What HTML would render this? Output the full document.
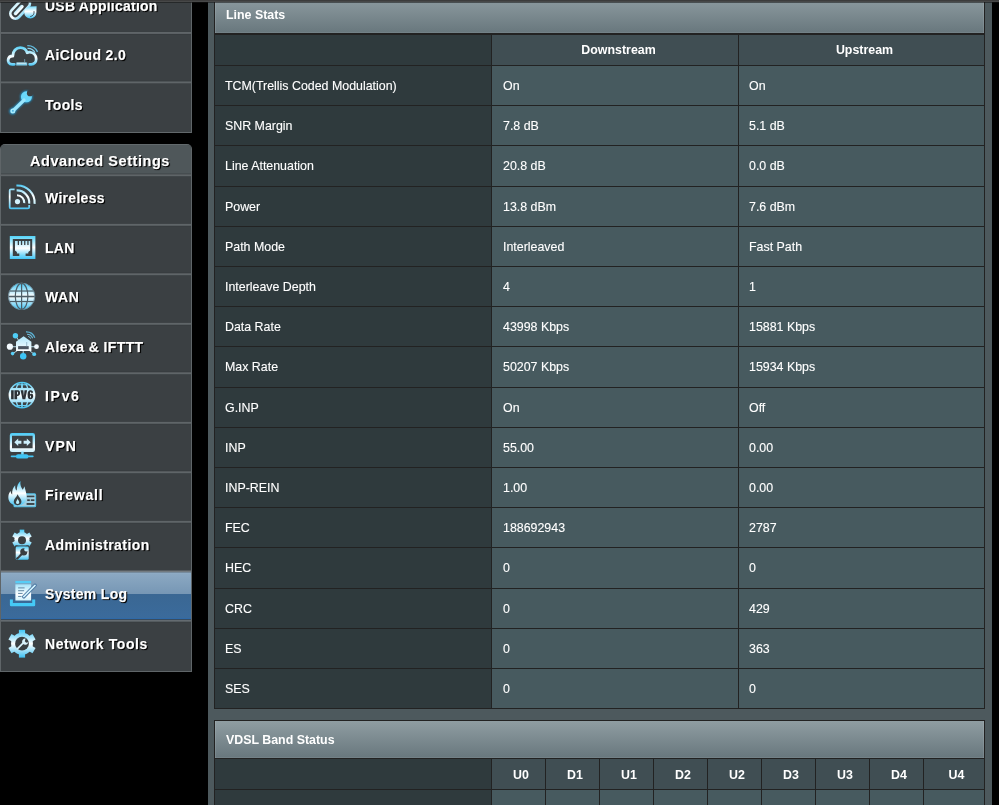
<!DOCTYPE html>
<html><head><meta charset="utf-8">
<style>
*{margin:0;padding:0;box-sizing:border-box}
html,body{width:999px;height:805px;overflow:hidden;background:#000;position:relative;font-family:"Liberation Sans",sans-serif}
.a{position:absolute}
.topstrip{left:0;top:0;width:999px;height:3px;background:linear-gradient(#3c3c3c 0px,#3c3c3c 1px,#474848 1px,#474848 2px,rgba(20,20,20,0.55) 2px,rgba(20,20,20,0.55) 3px);z-index:50}
.side{left:0;top:0;width:192px;border-left:1px solid #5f6568;border-right:1px solid #5f6568;background:#3a3f42}
.mi{position:absolute;left:1px;width:190px;background:#3a3f42}
.ml{position:absolute;left:0;width:192px;height:1px;background:#5d6366}
.mt{position:absolute;left:45px;color:#fff;font-weight:bold;font-size:14px;letter-spacing:0.3px;text-shadow:1px 1px 1px #000, 1px 1px 0 #111;white-space:nowrap;line-height:16px;-webkit-text-stroke:0.25px rgba(255,255,255,0.7)}
.ic{position:absolute;left:4px;width:36px;height:36px}
.panel{left:208px;top:0;width:784px;height:805px;background:#4d595d}
.tbl{position:absolute;left:214px;width:771px;border:1px solid #222;background:#222}
.th{position:absolute;left:215px;width:769px;background:linear-gradient(#8f9da2,#68777d);box-shadow:inset 1px 0 0 rgba(255,255,255,0.10),inset -1px 0 0 rgba(255,255,255,0.10),inset 0 -1px 0 rgba(255,255,255,0.07);color:#fff;font-weight:bold;font-size:12.4px;padding-left:11px;white-space:nowrap}
.hl{position:absolute;height:1px;background:#222527}
.vl{position:absolute;width:1px;background:#222527}
.c1{position:absolute;left:215px;width:276px;background:#2f3a3d}
.c2{position:absolute;background:#475a5f}
.ch{position:absolute;background:#404e53}
.t{position:absolute;color:#fff;font-size:12.4px;white-space:nowrap;line-height:14px;-webkit-text-stroke:0.2px rgba(255,255,255,0.6)}
.tb{position:absolute;color:#fff;font-size:12.4px;font-weight:bold;white-space:nowrap;line-height:14px;text-align:center}
.t,.tb,.mt{will-change:transform}
.th span{display:inline-block;will-change:transform}
</style></head><body>
<div class="a topstrip"></div>

<div class="a" style="left:0;top:0;width:192px;height:133px;background:#3b4043;border-left:1px solid #5f6568;border-right:1px solid #5f6568;border-bottom:1px solid #62686b"></div>
<div class="a" style="left:0;top:-16.6px;width:44px;height:50px"><svg width="44" height="52" viewBox="0 -16.60 44 52" style="position:absolute;left:0;top:0;overflow:visible"><defs><linearGradient id="i1a" gradientUnits="userSpaceOnUse" x1="0" y1="2" x2="0" y2="19"><stop offset="0" stop-color="#c8f1fd"/><stop offset="0.45" stop-color="#ffffff"/><stop offset="1" stop-color="#36bff3"/></linearGradient><linearGradient id="i1b" gradientUnits="userSpaceOnUse" x1="0" y1="7" x2="0" y2="19"><stop offset="0" stop-color="#7fdcfa"/><stop offset="0.4" stop-color="#ffffff"/><stop offset="1" stop-color="#3dc3f4"/></linearGradient><linearGradient id="i1c" gradientUnits="userSpaceOnUse" x1="0" y1="4" x2="0" y2="16"><stop offset="0" stop-color="#5fd0f6"/><stop offset="0.5" stop-color="#ffffff"/><stop offset="1" stop-color="#3cc3f4"/></linearGradient></defs><g transform="rotate(-47 20 9)">
      <rect x="8.2" y="4" width="24" height="10" rx="5" fill="none" stroke="url(#i1a)" stroke-width="2.7"/>
      <rect x="11.6" y="7.2" width="13" height="3.6" rx="1.8" fill="url(#i1c)"/>
    </g>
    <path d="M36.6 6.6 L36.4 12.9 A6.1 6.1 0 1 1 30.2 6.8 Z" fill="url(#i1b)"/>
    <path d="M34 11.5 C34.5 14.5 33 16.5 30.2 17" stroke="#3a4a55" stroke-width="0.9" fill="none"/></svg></div>
<div class="mt" style="top:-2.1px;letter-spacing:0.23px">USB Application</div>
<div class="a" style="left:1px;top:30px;width:190px;height:6px;background:linear-gradient(rgb(59,64,67) 0px 1px, rgb(58,63,66) 1px 2px, rgb(95,101,104) 2px 3px, rgb(91,96,100) 3px 4px, rgb(55,60,63) 4px 5px, rgb(59,64,67) 5px 6px)"></div>
<div class="a" style="left:0;top:32.9px;width:44px;height:50px"><svg width="44" height="52" viewBox="0 32.90 44 52" style="position:absolute;left:0;top:0;overflow:visible"><defs><linearGradient id="i2a" gradientUnits="userSpaceOnUse" x1="0" y1="46" x2="0" y2="66"><stop offset="0" stop-color="#4fcff7"/><stop offset="0.55" stop-color="#ffffff"/><stop offset="1" stop-color="#3fc3f4"/></linearGradient></defs><path d="M14.3 64.2 L12.2 64.2 C9 64.2 7.6 61.6 8.2 59.2 C8.8 57 10.6 55.7 12.8 55.9 C12.7 51 16.1 47.5 20.2 47.5 C23.8 47.5 26.3 49.8 27.2 52.6 C28 52.2 29 52 30 52.1 C33.8 52.5 36.2 55.6 36.2 59 C36.2 62 34 64.2 31.3 64.2 L29.7 64.2" fill="none" stroke="url(#i2a)" stroke-width="2.8" stroke-linecap="round" stroke-linejoin="round"/>
    <path d="M27.3 45.6 A11 11 0 0 1 37.5 51.8" fill="none" stroke="#62bde0" stroke-width="1.3"/>
    <path d="M27.5 48.3 A8 8 0 0 1 35 52.6" fill="none" stroke="#8fd4ee" stroke-width="1.2"/>
    <rect x="16.2" y="62.4" width="11" height="3" fill="#7fcdea"/>
    <rect x="17" y="62.6" width="9" height="1" fill="#d9eef6"/>
    <rect x="24.4" y="59" width="0.7" height="3.2" fill="#7fb7cf"/></svg></div>
<div class="mt" style="top:47.4px;letter-spacing:0.38px">AiCloud 2.0</div>
<div class="a" style="left:1px;top:79px;width:190px;height:7px;background:linear-gradient(rgb(59,64,67) 0px 1px, rgb(57,62,65) 1px 2px, rgb(77,83,86) 2px 3px, rgb(95,101,104) 3px 4px, rgb(69,74,77) 4px 5px, rgb(59,64,67) 5px 6px, rgb(59,64,67) 6px 7px)"></div>
<div class="a" style="left:0;top:82.4px;width:44px;height:50px"><svg width="44" height="52" viewBox="0 82.40 44 52" style="position:absolute;left:0;top:0;overflow:visible"><defs></defs><mask id="i3m" maskUnits="userSpaceOnUse" x="0" y="80" width="44" height="40"><rect x="0" y="80" width="44" height="40" fill="#fff"/><circle cx="30" cy="93.6" r="3.1" fill="#000"/><path d="M30 93.6 L36 87.6 L38 95 Z" fill="#000"/></mask>
    <filter id="i3f" x="-50%" y="-50%" width="200%" height="200%"><feGaussianBlur stdDeviation="1.3"/></filter>
    <g mask="url(#i3m)">
    <g filter="url(#i3f)" opacity="0.9" fill="#20a6e8" stroke="#20a6e8"><circle cx="26.4" cy="97.2" r="5.6"/><path d="M24 100.5 L12.6 111.6" stroke-width="4.2" stroke-linecap="round"/><circle cx="12.6" cy="111.6" r="2.8"/></g>
    <circle cx="26.4" cy="97.2" r="5.5" fill="#6ad8fb"/>
    </g>
    <path d="M24 100.5 L12.8 111.4" stroke="#9ae6fd" stroke-width="3.4" stroke-linecap="round"/>
    <circle cx="12.8" cy="111.4" r="2.5" fill="#a6eafd"/>
    <circle cx="12.9" cy="111.3" r="0.8" fill="#2d9fd6"/></svg></div>
<div class="mt" style="top:96.9px;letter-spacing:0.3px">Tools</div>
<div class="a" style="left:0;top:144px;width:192px;height:528px;background:#3b4043;border:1px solid #5f6568;border-top-color:#62696c;border-radius:5px 5px 0 0"></div>
<div class="a" style="left:1px;top:145px;width:190px;height:30px;background:#4f575a;border-radius:4px 4px 0 0"></div>
<div class="mt" style="left:4px;width:192px;text-align:center;top:152.5px;font-size:14.5px;letter-spacing:0.55px">Advanced Settings</div>
<div class="a" style="left:1px;top:172px;width:190px;height:6px;background:linear-gradient(rgb(79,87,90) 0px 1px, rgb(70,77,80) 1px 2px, rgb(83,88,91) 2px 3px, rgb(95,101,104) 3px 4px, rgb(64,70,73) 4px 5px, rgb(59,64,67) 5px 6px)"></div>
<div class="a" style="left:0;top:175.3px;width:44px;height:50px"><svg width="44" height="52" viewBox="0 175.28 44 52" style="position:absolute;left:0;top:0;overflow:visible"><defs><linearGradient id="i4a" gradientUnits="userSpaceOnUse" x1="0" y1="184" x2="0" y2="210"><stop offset="0" stop-color="#3fc5f5"/><stop offset="0.5" stop-color="#ffffff"/><stop offset="1" stop-color="#3cc0f2"/></linearGradient><linearGradient id="i4b" gradientUnits="userSpaceOnUse" x1="0" y1="184" x2="0" y2="205"><stop offset="0" stop-color="#3fc4f4"/><stop offset="0.6" stop-color="#ffffff"/><stop offset="1" stop-color="#bfeefc"/></linearGradient></defs><path d="M14.6 189.7 L10.8 189.7 Q9.7 189.7 9.7 190.8 L9.7 207.5 Q9.7 208.7 10.8 208.7 L28 208.7 Q29.2 208.7 29.2 207.5 L29.2 205.3" fill="none" stroke="url(#i4a)" stroke-width="1.8"/>
    <circle cx="17.5" cy="201.9" r="2.6" fill="#d2f1fc"/>
    <path d="M17 195.6 A7.3 7.3 0 0 1 24.3 203.4" fill="none" stroke="url(#i4b)" stroke-width="2.1"/>
    <path d="M16.6 190.7 A12.2 12.2 0 0 1 29.2 203.9" fill="none" stroke="url(#i4b)" stroke-width="2.1"/>
    <path d="M16.4 185.8 A17.2 17.2 0 0 1 34.6 204.1" fill="none" stroke="url(#i4b)" stroke-width="2.1"/></svg></div>
<div class="mt" style="top:190.3px;letter-spacing:0.3px">Wireless</div>
<div class="a" style="left:1px;top:222px;width:190px;height:6px;background:linear-gradient(rgb(59,64,67) 0px 1px, rgb(62,67,70) 1px 2px, rgb(95,101,104) 2px 3px, rgb(85,91,94) 3px 4px, rgb(56,61,64) 4px 5px, rgb(59,64,67) 5px 6px)"></div>
<div class="a" style="left:0;top:224.8px;width:44px;height:50px"><svg width="44" height="52" viewBox="0 224.78 44 52" style="position:absolute;left:0;top:0;overflow:visible"><defs><linearGradient id="i5a" gradientUnits="userSpaceOnUse" x1="0" y1="235.5" x2="0" y2="259"><stop offset="0" stop-color="#4dd2f9"/><stop offset="0.5" stop-color="#ffffff"/><stop offset="1" stop-color="#3cc4f5"/></linearGradient><linearGradient id="i5b" gradientUnits="userSpaceOnUse" x1="0" y1="240" x2="0" y2="256"><stop offset="0" stop-color="#9fe3fa"/><stop offset="0.5" stop-color="#ffffff"/><stop offset="1" stop-color="#62d2f7"/></linearGradient></defs><path d="M9.8 235.7 H35.4 V258.7 H9.8 Z M12.8 238.7 V255.7 H32.2 V238.7 Z" fill="url(#i5a)" fill-rule="evenodd"/>
    <path d="M15 240.7 L30.2 240.7 L30.2 250.4 L28.3 251.8 L28.3 253.2 L25.6 253.2 L25.6 256 L19.3 256 L19.3 253.2 L16.9 253.2 L16.9 251.8 L15 250.4 Z" fill="url(#i5b)"/>
    <g fill="#3a3f42"><rect x="17.7" y="240.6" width="1.3" height="4.2"/><rect x="20.9" y="240.6" width="1.3" height="4.2"/><rect x="24.1" y="240.6" width="1.3" height="4.2"/><rect x="27.3" y="240.6" width="1.3" height="4.2"/></g></svg></div>
<div class="mt" style="top:239.8px;letter-spacing:0.3px">LAN</div>
<div class="a" style="left:1px;top:271px;width:190px;height:6px;background:linear-gradient(rgb(59,64,67) 0px 1px, rgb(56,61,64) 1px 2px, rgb(83,88,91) 2px 3px, rgb(95,101,104) 3px 4px, rgb(64,70,73) 4px 5px, rgb(59,64,67) 5px 6px)"></div>
<div class="a" style="left:0;top:274.3px;width:44px;height:50px"><svg width="44" height="52" viewBox="0 274.28 44 52" style="position:absolute;left:0;top:0;overflow:visible"><defs><linearGradient id="i6a" gradientUnits="userSpaceOnUse" x1="0" y1="283" x2="0" y2="310"><stop offset="0" stop-color="#3fc5f5"/><stop offset="0.5" stop-color="#ffffff"/><stop offset="1" stop-color="#3cc0f2"/></linearGradient></defs><circle cx="21.6" cy="296.6" r="13.2" fill="url(#i6a)" stroke="#70909f" stroke-width="0.9"/>
    <g stroke="#4d5d66" stroke-width="1.2" fill="none">
    <ellipse cx="21.6" cy="296.6" rx="6.3" ry="13"/>
    <line x1="21.6" y1="283.6" x2="21.6" y2="309.6"/>
    <line x1="9.5" y1="291.3" x2="33.7" y2="291.3"/>
    <line x1="8.5" y1="296.8" x2="34.7" y2="296.8" stroke-width="1.6"/>
    <line x1="9.5" y1="301.8" x2="33.7" y2="301.8"/>
    </g></svg></div>
<div class="mt" style="top:289.3px;letter-spacing:0.55px">WAN</div>
<div class="a" style="left:1px;top:321px;width:190px;height:6px;background:linear-gradient(rgb(59,64,67) 0px 1px, rgb(62,67,70) 1px 2px, rgb(95,101,104) 2px 3px, rgb(85,91,94) 3px 4px, rgb(56,61,64) 4px 5px, rgb(59,64,67) 5px 6px)"></div>
<div class="a" style="left:0;top:323.8px;width:44px;height:50px"><svg width="44" height="52" viewBox="0 323.78 44 52" style="position:absolute;left:0;top:0;overflow:visible"><defs><linearGradient id="i7a" gradientUnits="userSpaceOnUse" x1="0" y1="336" x2="0" y2="351"><stop offset="0" stop-color="#aee6fb"/><stop offset="1" stop-color="#ffffff"/></linearGradient></defs><g stroke="#bfe6f5" stroke-width="0.9">
    <line x1="10" y1="346.5" x2="36.5" y2="346.5"/><line x1="15.4" y1="335.6" x2="19" y2="340.5"/>
    <line x1="12.6" y1="353.4" x2="18" y2="350"/><line x1="34.2" y1="354" x2="29" y2="350"/><line x1="23.2" y1="350" x2="23.2" y2="354"/></g>
    <path d="M16 341.6 L23.6 336 L31.4 341.6 L31.4 350.8 L16 350.8 Z" fill="url(#i7a)"/>
    <rect x="18.1" y="345.9" width="10.6" height="3.1" fill="#4d5662"/>
    <rect x="26.3" y="341.8" width="0.9" height="4.2" fill="#8fb3c6"/>
    <circle cx="15.4" cy="335.6" r="2.7" fill="#4fcdf6"/>
    <circle cx="9.9" cy="346.5" r="3.1" fill="#f4fbff"/>
    <circle cx="36.5" cy="346.5" r="2.4" fill="#f2faff"/>
    <circle cx="12.6" cy="353.4" r="1.8" fill="#58cff7"/>
    <circle cx="34.2" cy="354" r="1.9" fill="#58cff7"/>
    <circle cx="23.2" cy="356.1" r="3.2" fill="#3ec5f5"/>
    <path d="M26 331.6 A9 9 0 0 1 34.8 337.6" fill="none" stroke="#5cb3d6" stroke-width="1.2"/>
    <path d="M27 334 A6 6 0 0 1 32.6 338" fill="none" stroke="#6fbddc" stroke-width="1.1"/>
    <path d="M28.2 336.2 A3.2 3.2 0 0 1 30.6 338.4" fill="none" stroke="#7cc4e0" stroke-width="1"/></svg></div>
<div class="mt" style="top:338.8px;letter-spacing:0.4px">Alexa &amp; IFTTT</div>
<div class="a" style="left:1px;top:370px;width:190px;height:6px;background:linear-gradient(rgb(59,64,67) 0px 1px, rgb(56,61,64) 1px 2px, rgb(83,88,91) 2px 3px, rgb(95,101,104) 3px 4px, rgb(64,70,73) 4px 5px, rgb(59,64,67) 5px 6px)"></div>
<div class="a" style="left:0;top:373.3px;width:44px;height:50px"><svg width="44" height="52" viewBox="0 373.28 44 52" style="position:absolute;left:0;top:0;overflow:visible"><defs><linearGradient id="i8a" gradientUnits="userSpaceOnUse" x1="0" y1="382" x2="0" y2="409"><stop offset="0" stop-color="#45c6f3"/><stop offset="0.5" stop-color="#ffffff"/><stop offset="1" stop-color="#3cc0f2"/></linearGradient></defs><clipPath id="i8c"><circle cx="22" cy="395.4" r="11.8"/></clipPath>
    <circle cx="22" cy="395.4" r="13.4" fill="url(#i8a)"/>
    <g clip-path="url(#i8c)">
      <rect x="8" y="381" width="28" height="7.2" fill="#3a3f42"/>
      <rect x="8" y="402.6" width="28" height="8" fill="#3a3f42"/>
      <g fill="none" stroke="url(#i8a)" stroke-width="1.4"><ellipse cx="22" cy="395.4" rx="6.8" ry="13.2"/><line x1="22" y1="381" x2="22" y2="410" stroke-width="1.8"/><line x1="8" y1="385" x2="36" y2="385" stroke-width="1.1"/><line x1="8" y1="405.8" x2="36" y2="405.8" stroke-width="1.1"/></g>
    </g>
    <path d="M0 0 H2.6 V9 H0 Z M3.3 0 H6.9 C8.5 0 8.9 1.2 8.9 2.8 C8.9 4.4 8.5 5.6 6.9 5.6 H6 V9 H3.3 Z M6 1.5 V4.1 H6.5 C6.9 4.1 7 3.6 7 2.8 C7 2 6.9 1.5 6.5 1.5 Z M9.5 0 H12.2 L12.8 5.6 L13.4 0 H16 L14.2 9 H11.4 Z M19.3 0 C17.3 0 16.5 1.5 16.5 4.5 C16.5 7.5 17.3 9 19.3 9 C21.3 9 22.1 7.7 22.1 5.8 C22.1 4 21.3 3.4 20.2 3.4 C19.5 3.4 19.1 3.6 18.9 4 V3.2 C18.9 2 19 1.5 19.4 1.5 C19.8 1.5 19.9 1.9 19.9 2.5 H22 C22 0.9 21.2 0 19.3 0 Z M19.3 5.1 C19 5.1 18.9 5.5 18.9 6.2 C18.9 7 19 7.5 19.3 7.5 C19.7 7.5 19.9 7.1 19.9 6.2 C19.9 5.5 19.7 5.1 19.3 5.1 Z" transform="translate(11.1 390.6)" fill="#2b3136" fill-rule="evenodd"/></svg></div>
<div class="mt" style="top:388.3px;letter-spacing:1.7px">IPv6</div>
<div class="a" style="left:1px;top:420px;width:190px;height:6px;background:linear-gradient(rgb(59,64,67) 0px 1px, rgb(62,67,70) 1px 2px, rgb(95,101,104) 2px 3px, rgb(85,91,94) 3px 4px, rgb(56,61,64) 4px 5px, rgb(59,64,67) 5px 6px)"></div>
<div class="a" style="left:0;top:422.8px;width:44px;height:50px"><svg width="44" height="52" viewBox="0 422.78 44 52" style="position:absolute;left:0;top:0;overflow:visible"><defs><linearGradient id="i9a" gradientUnits="userSpaceOnUse" x1="0" y1="432.8" x2="0" y2="452"><stop offset="0" stop-color="#48caf6"/><stop offset="0.7" stop-color="#ffffff"/><stop offset="1" stop-color="#c8effc"/></linearGradient></defs><path d="M12 432.8 H32.8 Q35 432.8 35 435 V449.5 Q35 451.7 32.8 451.7 H12 Q9.8 451.7 9.8 449.5 V435 Q9.8 432.8 12 432.8 Z M12 435.6 V448 H32.6 V435.6 Z" fill="url(#i9a)" fill-rule="evenodd"/>
    <path d="M14.3 442.1 L18.2 438.2 L18.2 440.6 L21.4 440.6 L21.4 443.6 L18.2 443.6 L18.2 445.9 Z" fill="#cdf0fc"/>
    <path d="M30.7 442.1 L26.8 438.2 L26.8 440.6 L23.6 440.6 L23.6 443.6 L26.8 443.6 L26.8 445.9 Z" fill="#cdf0fc"/>
    <rect x="21.2" y="451.5" width="2.5" height="3" fill="#7fdaf8"/>
    <rect x="10.7" y="455.2" width="23" height="1.9" rx="0.95" fill="#45c6f5"/>
    <rect x="15.9" y="454" width="12.6" height="4.4" rx="2.2" fill="#3ec4f4"/></svg></div>
<div class="mt" style="top:437.8px;letter-spacing:1.05px">VPN</div>
<div class="a" style="left:1px;top:469px;width:190px;height:6px;background:linear-gradient(rgb(59,64,67) 0px 1px, rgb(56,61,64) 1px 2px, rgb(83,88,91) 2px 3px, rgb(95,101,104) 3px 4px, rgb(64,70,73) 4px 5px, rgb(59,64,67) 5px 6px)"></div>
<div class="a" style="left:0;top:472.3px;width:44px;height:50px"><svg width="44" height="52" viewBox="0 472.28 44 52" style="position:absolute;left:0;top:0;overflow:visible"><defs><linearGradient id="i10a" gradientUnits="userSpaceOnUse" x1="0" y1="481" x2="0" y2="506"><stop offset="0" stop-color="#3fc5f5"/><stop offset="0.5" stop-color="#ffffff"/><stop offset="1" stop-color="#3cc0f2"/></linearGradient></defs><rect x="14" y="494.2" width="21.6" height="12.8" rx="1" fill="#9fcfe2" stroke="#58c3ea" stroke-width="1.1"/>
    <g fill="#3b4246"><rect x="26.6" y="495.9" width="7.8" height="1.6"/><rect x="27.2" y="499.6" width="2.6" height="1.7"/><rect x="30.8" y="499.6" width="3.6" height="1.7"/><rect x="26.6" y="503.3" width="7.8" height="1.9"/></g>
    <path d="M17.4 505.8 C11 505.8 7.8 501.5 8.4 496.3 C8.7 493.8 9.8 492.3 10.6 491.3 C10.8 493.3 11.4 494.4 12.2 494.9 C11.7 490.8 13.3 487.3 15.2 485.5 C15 488.4 15.8 490.6 16.7 490.9 C16.8 486.4 18.2 483.2 20.5 481.3 C19.8 485 21.2 488.2 22.8 490 C23.5 488.4 24.2 487.4 24.5 486.5 C24.8 489 26.6 492.4 26.6 496.8 C26.6 502 23.2 505.8 17.4 505.8 Z" fill="url(#i10a)"/>
    <path d="M17.6 505.6 C15 505.6 13.4 503.6 13.8 501.4 C14.2 499 16.6 497.4 17.6 494.6 C18.8 497.4 21 499 21.4 501.4 C21.8 503.6 20.2 505.6 17.6 505.6 Z" fill="#3a3f42"/>
    <path d="M17.6 504.2 C16.4 504.2 15.8 503.2 16.1 502.2 C16.5 501 17.4 500.2 17.6 498.8 C18 500.2 18.9 501 19.2 502.2 C19.5 503.2 18.9 504.2 17.6 504.2 Z" fill="#b7ecfb"/></svg></div>
<div class="mt" style="top:487.3px;letter-spacing:0.77px">Firewall</div>
<div class="a" style="left:1px;top:519px;width:190px;height:6px;background:linear-gradient(rgb(59,64,67) 0px 1px, rgb(62,67,70) 1px 2px, rgb(95,101,104) 2px 3px, rgb(85,91,94) 3px 4px, rgb(56,61,64) 4px 5px, rgb(59,64,67) 5px 6px)"></div>
<div class="a" style="left:0;top:521.8px;width:44px;height:50px"><svg width="44" height="52" viewBox="0 521.78 44 52" style="position:absolute;left:0;top:0;overflow:visible"><defs><linearGradient id="i11a" gradientUnits="userSpaceOnUse" x1="0" y1="529.5" x2="0" y2="547"><stop offset="0" stop-color="#48caf6"/><stop offset="0.5" stop-color="#ffffff"/><stop offset="1" stop-color="#3cc2f3"/></linearGradient><linearGradient id="i11b" gradientUnits="userSpaceOnUse" x1="0" y1="546" x2="0" y2="560"><stop offset="0" stop-color="#48caf6"/><stop offset="0.45" stop-color="#ffffff"/><stop offset="1" stop-color="#39c0f2"/></linearGradient></defs><circle cx="22" cy="539.3" r="7.6" fill="url(#i11a)"/><polygon points="19.70,529.40 24.30,529.40 24.30,539.30 19.70,539.30" fill="url(#i11a)"/><polygon points="29.42,532.36 31.72,536.34 23.15,541.29 20.85,537.31" fill="url(#i11a)"/><polygon points="31.72,542.26 29.42,546.24 20.85,541.29 23.15,537.31" fill="url(#i11a)"/><polygon points="24.30,549.20 19.70,549.20 19.70,539.30 24.30,539.30" fill="url(#i11a)"/><polygon points="14.58,546.24 12.28,542.26 20.85,537.31 23.15,541.29" fill="url(#i11a)"/><polygon points="12.28,536.34 14.58,532.36 23.15,537.31 20.85,541.29" fill="url(#i11a)"/>
    <circle cx="22" cy="540" r="4" fill="#3a3f42"/>
    <rect x="15.2" y="545.2" width="14" height="1.3" fill="#3a3f42"/>
    <rect x="15.7" y="546.4" width="13" height="13.2" rx="1.4" fill="url(#i11b)"/>
    <mask id="i11m" maskUnits="userSpaceOnUse" x="10" y="540" width="25" height="25"><rect x="10" y="540" width="25" height="25" fill="#fff"/><circle cx="26.2" cy="549.2" r="2" fill="#000"/><path d="M26.2 549.2 L30 545.5 L31 551 Z" fill="#000"/></mask>
    <g mask="url(#i11m)"><circle cx="23.8" cy="551.6" r="3.6" fill="#3a3f42"/></g>
    <path d="M22.5 553 L17.2 558.3" stroke="#3a3f42" stroke-width="2.3" stroke-linecap="round"/>
    <path d="M17 557 L18.8 555.2" stroke="#cfefff" stroke-width="0.6"/></svg></div>
<div class="mt" style="top:536.8px;letter-spacing:0.42px">Administration</div>
<div class="a" style="left:1px;top:571.3px;width:190px;height:49.5px;background:linear-gradient(#8eabc4 0%,#7797b5 45%,#3a6793 46%,#3b6b9c 97%,#2f6aa8 100%)"></div>
<div class="a" style="left:1px;top:569px;width:190px;height:5px;background:linear-gradient(rgb(59,64,67) 0px 1px, rgb(86,92,96) 1px 2px, rgb(115,123,128) 2px 3px, rgb(118,139,157) 3px 4px, rgb(142,171,196) 4px 5px)"></div>
<div class="a" style="left:0;top:571.3px;width:44px;height:50px"><svg width="44" height="52" viewBox="0 571.28 44 52" style="position:absolute;left:0;top:0;overflow:visible"><defs><linearGradient id="i12a" gradientUnits="userSpaceOnUse" x1="0" y1="585" x2="0" y2="601"><stop offset="0" stop-color="#a8e5fb"/><stop offset="0.6" stop-color="#ffffff"/><stop offset="1" stop-color="#d0f1fc"/></linearGradient></defs><rect x="15.4" y="581.2" width="15.7" height="2.4" fill="#56cdf6"/>
    <rect x="15.4" y="584.6" width="15.7" height="16.2" fill="url(#i12a)"/>
    <g fill="#6f93ad"><rect x="18.1" y="587.6" width="6.5" height="1.1"/><rect x="18.1" y="590.4" width="6" height="1.1"/><rect x="18.1" y="593.2" width="4.5" height="1.1"/><rect x="18.1" y="596.2" width="3.5" height="1.1"/></g>
    <path d="M23.8 597 L35 585.6" stroke="#3f6e9c" stroke-width="3.4" stroke-linecap="round"/>
    <path d="M23.8 597 L35 585.6" stroke="#d2f2fd" stroke-width="1.7" stroke-linecap="round"/>
    <path d="M9.9 599.8 L12.9 599.8 L12.9 603.2 L32.2 603.2 L32.2 599.8 L35.2 599.8 L35.2 605.4 Q35.2 606.6 34 606.6 L11.1 606.6 Q9.9 606.6 9.9 605.4 Z" fill="#45c9f6"/></svg></div>
<div class="mt" style="top:586.3px;letter-spacing:0.3px">System Log</div>
<div class="a" style="left:1px;top:618px;width:190px;height:6px;background:linear-gradient(rgb(47,106,168) 0px 1px, rgb(56,76,96) 1px 2px, rgb(100,107,112) 2px 3px, rgb(84,91,95) 3px 4px, rgb(57,62,65) 4px 5px, rgb(59,64,67) 5px 6px)"></div>
<div class="a" style="left:0;top:620.8px;width:44px;height:50px"><svg width="44" height="52" viewBox="0 620.78 44 52" style="position:absolute;left:0;top:0;overflow:visible"><defs><linearGradient id="i13a" gradientUnits="userSpaceOnUse" x1="0" y1="629.5" x2="0" y2="657.5"><stop offset="0" stop-color="#3fc5f5"/><stop offset="0.5" stop-color="#ffffff"/><stop offset="1" stop-color="#3cc0f2"/></linearGradient></defs><circle cx="22" cy="643.5" r="10.9" fill="url(#i13a)"/><polygon points="18.90,629.60 25.10,629.60 25.10,643.50 18.90,643.50" fill="url(#i13a)"/><polygon points="32.49,633.87 35.59,639.23 23.55,646.18 20.45,640.82" fill="url(#i13a)"/><polygon points="35.59,647.77 32.49,653.13 20.45,646.18 23.55,640.82" fill="url(#i13a)"/><polygon points="25.10,657.40 18.90,657.40 18.90,643.50 25.10,643.50" fill="url(#i13a)"/><polygon points="11.51,653.13 8.41,647.77 20.45,640.82 23.55,646.18" fill="url(#i13a)"/><polygon points="8.41,639.23 11.51,633.87 23.55,640.82 20.45,646.18" fill="url(#i13a)"/>
    <circle cx="22" cy="643.5" r="6.9" fill="#3a3f42"/>
    <path d="M17.6 648.4 L23 643" stroke="#d9f3fc" stroke-width="1.7" stroke-linecap="round"/>
    <path d="M25.2 638.2 C23.2 638.2 21.9 640 22.1 641.9 C22.3 643.8 24 644.9 25.7 644.6 C27.1 644.4 28 643.3 28.1 642 L26.2 642.5 L24.8 641.1 L25.6 638.3 Z" fill="#d9f3fc"/></svg></div>
<div class="mt" style="top:635.8px;letter-spacing:0.57px">Network Tools</div>
<div class="a panel"></div>
<div class="tbl" style="top:-5px;height:714px"></div>
<div class="th" style="top:-4px;height:37px;line-height:37px;padding-top:1px"><span>Line Stats</span></div>
<div class="c1" style="top:35px;height:30px"></div>
<div class="ch" style="left:492px;top:35px;width:246px;height:30px"></div>
<div class="ch" style="left:739px;top:35px;width:245px;height:30px"></div>
<div class="tb" style="left:499px;width:239px;top:43px">Downstream</div>
<div class="tb" style="left:745px;width:239px;top:43px">Upstream</div>
<div class="c1" style="top:66px;height:39px"></div>
<div class="c2" style="left:492px;top:66px;width:246px;height:39px"></div>
<div class="c2" style="left:739px;top:66px;width:245px;height:39px"></div>
<div class="t" style="left:225.4px;top:78.5px">TCM(Trellis Coded Modulation)</div>
<div class="t" style="left:503px;top:78.5px">On</div>
<div class="t" style="left:748.6px;top:78.5px">On</div>
<div class="c1" style="top:106px;height:39px"></div>
<div class="c2" style="left:492px;top:106px;width:246px;height:39px"></div>
<div class="c2" style="left:739px;top:106px;width:245px;height:39px"></div>
<div class="t" style="left:225.4px;top:118.5px">SNR Margin</div>
<div class="t" style="left:503px;top:118.5px">7.8 dB</div>
<div class="t" style="left:748.6px;top:118.5px">5.1 dB</div>
<div class="c1" style="top:146px;height:40px"></div>
<div class="c2" style="left:492px;top:146px;width:246px;height:40px"></div>
<div class="c2" style="left:739px;top:146px;width:245px;height:40px"></div>
<div class="t" style="left:225.4px;top:158.5px">Line Attenuation</div>
<div class="t" style="left:503px;top:158.5px">20.8 dB</div>
<div class="t" style="left:748.6px;top:158.5px">0.0 dB</div>
<div class="c1" style="top:187px;height:39px"></div>
<div class="c2" style="left:492px;top:187px;width:246px;height:39px"></div>
<div class="c2" style="left:739px;top:187px;width:245px;height:39px"></div>
<div class="t" style="left:225.4px;top:199.5px">Power</div>
<div class="t" style="left:503px;top:199.5px">13.8 dBm</div>
<div class="t" style="left:748.6px;top:199.5px">7.6 dBm</div>
<div class="c1" style="top:227px;height:39px"></div>
<div class="c2" style="left:492px;top:227px;width:246px;height:39px"></div>
<div class="c2" style="left:739px;top:227px;width:245px;height:39px"></div>
<div class="t" style="left:225.4px;top:239.5px">Path Mode</div>
<div class="t" style="left:503px;top:239.5px">Interleaved</div>
<div class="t" style="left:748.6px;top:239.5px">Fast Path</div>
<div class="c1" style="top:267px;height:39px"></div>
<div class="c2" style="left:492px;top:267px;width:246px;height:39px"></div>
<div class="c2" style="left:739px;top:267px;width:245px;height:39px"></div>
<div class="t" style="left:225.4px;top:279.5px">Interleave Depth</div>
<div class="t" style="left:503px;top:279.5px">4</div>
<div class="t" style="left:748.6px;top:279.5px">1</div>
<div class="c1" style="top:307px;height:39px"></div>
<div class="c2" style="left:492px;top:307px;width:246px;height:39px"></div>
<div class="c2" style="left:739px;top:307px;width:245px;height:39px"></div>
<div class="t" style="left:225.4px;top:319.5px">Data Rate</div>
<div class="t" style="left:503px;top:319.5px">43998 Kbps</div>
<div class="t" style="left:748.6px;top:319.5px">15881 Kbps</div>
<div class="c1" style="top:347px;height:40px"></div>
<div class="c2" style="left:492px;top:347px;width:246px;height:40px"></div>
<div class="c2" style="left:739px;top:347px;width:245px;height:40px"></div>
<div class="t" style="left:225.4px;top:359.5px">Max Rate</div>
<div class="t" style="left:503px;top:359.5px">50207 Kbps</div>
<div class="t" style="left:748.6px;top:359.5px">15934 Kbps</div>
<div class="c1" style="top:388px;height:39px"></div>
<div class="c2" style="left:492px;top:388px;width:246px;height:39px"></div>
<div class="c2" style="left:739px;top:388px;width:245px;height:39px"></div>
<div class="t" style="left:225.4px;top:400.5px">G.INP</div>
<div class="t" style="left:503px;top:400.5px">On</div>
<div class="t" style="left:748.6px;top:400.5px">Off</div>
<div class="c1" style="top:428px;height:39px"></div>
<div class="c2" style="left:492px;top:428px;width:246px;height:39px"></div>
<div class="c2" style="left:739px;top:428px;width:245px;height:39px"></div>
<div class="t" style="left:225.4px;top:440.5px">INP</div>
<div class="t" style="left:503px;top:440.5px">55.00</div>
<div class="t" style="left:748.6px;top:440.5px">0.00</div>
<div class="c1" style="top:468px;height:39px"></div>
<div class="c2" style="left:492px;top:468px;width:246px;height:39px"></div>
<div class="c2" style="left:739px;top:468px;width:245px;height:39px"></div>
<div class="t" style="left:225.4px;top:480.5px">INP-REIN</div>
<div class="t" style="left:503px;top:480.5px">1.00</div>
<div class="t" style="left:748.6px;top:480.5px">0.00</div>
<div class="c1" style="top:508px;height:39px"></div>
<div class="c2" style="left:492px;top:508px;width:246px;height:39px"></div>
<div class="c2" style="left:739px;top:508px;width:245px;height:39px"></div>
<div class="t" style="left:225.4px;top:520.5px">FEC</div>
<div class="t" style="left:503px;top:520.5px">188692943</div>
<div class="t" style="left:748.6px;top:520.5px">2787</div>
<div class="c1" style="top:548px;height:40px"></div>
<div class="c2" style="left:492px;top:548px;width:246px;height:40px"></div>
<div class="c2" style="left:739px;top:548px;width:245px;height:40px"></div>
<div class="t" style="left:225.4px;top:560.5px">HEC</div>
<div class="t" style="left:503px;top:560.5px">0</div>
<div class="t" style="left:748.6px;top:560.5px">0</div>
<div class="c1" style="top:589px;height:39px"></div>
<div class="c2" style="left:492px;top:589px;width:246px;height:39px"></div>
<div class="c2" style="left:739px;top:589px;width:245px;height:39px"></div>
<div class="t" style="left:225.4px;top:601.5px">CRC</div>
<div class="t" style="left:503px;top:601.5px">0</div>
<div class="t" style="left:748.6px;top:601.5px">429</div>
<div class="c1" style="top:629px;height:39px"></div>
<div class="c2" style="left:492px;top:629px;width:246px;height:39px"></div>
<div class="c2" style="left:739px;top:629px;width:245px;height:39px"></div>
<div class="t" style="left:225.4px;top:641.5px">ES</div>
<div class="t" style="left:503px;top:641.5px">0</div>
<div class="t" style="left:748.6px;top:641.5px">363</div>
<div class="c1" style="top:669px;height:39px"></div>
<div class="c2" style="left:492px;top:669px;width:246px;height:39px"></div>
<div class="c2" style="left:739px;top:669px;width:245px;height:39px"></div>
<div class="t" style="left:225.4px;top:681.5px">SES</div>
<div class="t" style="left:503px;top:681.5px">0</div>
<div class="t" style="left:748.6px;top:681.5px">0</div>
<div class="tbl" style="top:720px;height:100px"></div>
<div class="th" style="top:721px;height:37px;line-height:37px;padding-top:1px"><span>VDSL Band Status</span></div>
<div class="c1" style="top:759px;height:30px"></div>
<div class="ch" style="left:492px;top:759px;width:53px;height:30px"></div>
<div class="tb" style="left:497px;width:48px;top:768px">U0</div>
<div class="c2" style="left:492px;top:790px;width:53px;height:20px"></div>
<div class="ch" style="left:546px;top:759px;width:53px;height:30px"></div>
<div class="tb" style="left:551px;width:48px;top:768px">D1</div>
<div class="c2" style="left:546px;top:790px;width:53px;height:20px"></div>
<div class="ch" style="left:600px;top:759px;width:53px;height:30px"></div>
<div class="tb" style="left:605px;width:48px;top:768px">U1</div>
<div class="c2" style="left:600px;top:790px;width:53px;height:20px"></div>
<div class="ch" style="left:654px;top:759px;width:53px;height:30px"></div>
<div class="tb" style="left:659px;width:48px;top:768px">D2</div>
<div class="c2" style="left:654px;top:790px;width:53px;height:20px"></div>
<div class="ch" style="left:708px;top:759px;width:53px;height:30px"></div>
<div class="tb" style="left:713px;width:48px;top:768px">U2</div>
<div class="c2" style="left:708px;top:790px;width:53px;height:20px"></div>
<div class="ch" style="left:762px;top:759px;width:53px;height:30px"></div>
<div class="tb" style="left:767px;width:48px;top:768px">D3</div>
<div class="c2" style="left:762px;top:790px;width:53px;height:20px"></div>
<div class="ch" style="left:816px;top:759px;width:53px;height:30px"></div>
<div class="tb" style="left:821px;width:48px;top:768px">U3</div>
<div class="c2" style="left:816px;top:790px;width:53px;height:20px"></div>
<div class="ch" style="left:870px;top:759px;width:53px;height:30px"></div>
<div class="tb" style="left:875px;width:48px;top:768px">D4</div>
<div class="c2" style="left:870px;top:790px;width:53px;height:20px"></div>
<div class="ch" style="left:924px;top:759px;width:60px;height:30px"></div>
<div class="tb" style="left:929px;width:55px;top:768px">U4</div>
<div class="c2" style="left:924px;top:790px;width:60px;height:20px"></div>
<div class="c1" style="top:790px;height:20px"></div>
</body></html>
